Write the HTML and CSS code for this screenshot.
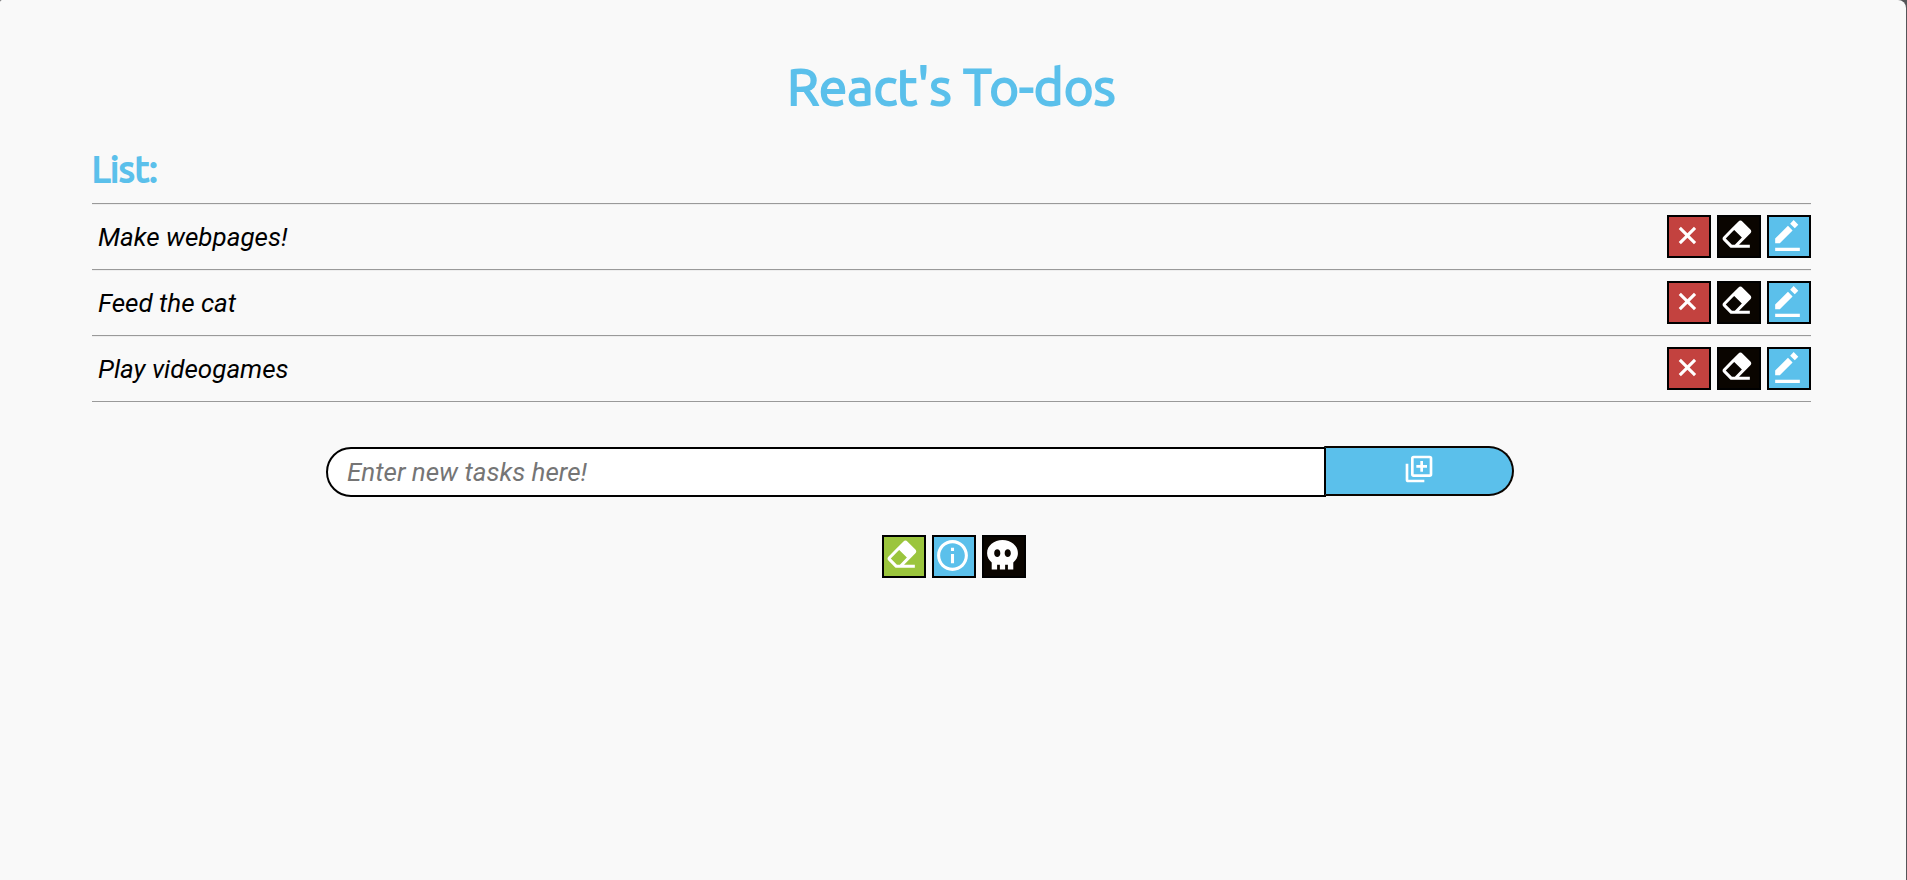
FILE: index.html
```html
<!DOCTYPE html>
<html lang="en">
<head>
<meta charset="utf-8">
<title>React's To-dos</title>
<link rel="stylesheet" href="styles.css">
</head>
<body>
<svg class="sprite" aria-hidden="true">
  <symbol id="x" viewBox="0 0 24 24"><path d="m16.192 6.344-4.243 4.242-4.242-4.242-1.414 1.414L10.535 12l-4.242 4.242 1.414 1.414 4.242-4.242 4.243 4.242 1.414-1.414L13.364 12l4.242-4.242z"/></symbol>
  <symbol id="eraser" viewBox="0 0 24 24"><path d="M12.48 3 7.73 7.75 2.99 12.59a2 2 0 0 0 0 2.82l4.3 4.3A1 1 0 0 0 8 20h12v-2h-7l7.22-7.22a2 2 0 0 0 0-2.83L15.31 3a2 2 0 0 0-2.83 0zM8.48 18H8.4l-4-4 4.75-4.84.74-.75 4.95 4.95-4.56 4.56z"/></symbol>
  <symbol id="edit" viewBox="0 0 24 24"><path d="m16 2.012 3 3L16.713 7.3l-3-3zM4 14v3h3l8.299-8.287-3-3zm0 6h16v2H4z"/></symbol>
  <symbol id="info" viewBox="0 0 24 24"><path d="M12 2C6.486 2 2 6.486 2 12s4.486 10 10 10 10-4.486 10-10S17.514 2 12 2zm0 18c-4.411 0-8-3.589-8-8s3.589-8 8-8 8 3.589 8 8-3.589 8-8 8z"/><path d="M11 11h2v6h-2zm0-4h2v2h-2z"/></symbol>
  <symbol id="skull" viewBox="0 0 24 24"><path fill-rule="evenodd" d="M12 2C6.500 2 2 5.600 2 10.500c0 2.500 1.200 4.500 3 6V21h3.500v-3H10.300v3h3.400v-3h1.800v3H19v-4.500c1.800-1.500 3-3.500 3-6C22 5.600 17.500 2 12 2zM8.600 8c1.100 0 2 1.100 2 2.500S9.700 13 8.600 13s-2-1.100-2-2.500S7.500 8 8.600 8zm6.800 0c1.100 0 2 1.100 2 2.500S16.500 13 15.400 13s-2-1.100-2-2.500S14.300 8 15.400 8z"/></symbol>
  <symbol id="add" viewBox="0 0 24 24"><path fill-rule="evenodd" d="M8 2h12a2 2 0 0 1 2 2v12a2 2 0 0 1-2 2H8a2 2 0 0 1-2-2V4a2 2 0 0 1 2-2zm0 2v12h12V4zM13 6h2v3h3v2h-3v3h-2v-3h-3V9h3zM2 8h2v12h12v2H4a2 2 0 0 1-2-2z"/></symbol>
</svg>
<main class="page">
  <h1 class="title">React's To-dos</h1>
  <h2 class="subtitle">List:</h2>
  <ul class="tasks">
    <li class="task">
      <span class="task-name">Make webpages!</span>
      <button class="btn btn-red" aria-label="Delete"><svg class="icon"><use href="#x"/></svg></button>
      <button class="btn btn-black" aria-label="Erase"><svg class="icon"><use href="#eraser"/></svg></button>
      <button class="btn btn-blue" aria-label="Edit"><svg class="icon"><use href="#edit"/></svg></button>
    </li>
    <li class="task">
      <span class="task-name">Feed the cat</span>
      <button class="btn btn-red" aria-label="Delete"><svg class="icon"><use href="#x"/></svg></button>
      <button class="btn btn-black" aria-label="Erase"><svg class="icon"><use href="#eraser"/></svg></button>
      <button class="btn btn-blue" aria-label="Edit"><svg class="icon"><use href="#edit"/></svg></button>
    </li>
    <li class="task">
      <span class="task-name">Play videogames</span>
      <button class="btn btn-red" aria-label="Delete"><svg class="icon"><use href="#x"/></svg></button>
      <button class="btn btn-black" aria-label="Erase"><svg class="icon"><use href="#eraser"/></svg></button>
      <button class="btn btn-blue" aria-label="Edit"><svg class="icon"><use href="#edit"/></svg></button>
    </li>
  </ul>
  <form class="new-task">
    <input class="new-task-input" type="text" aria-label="New task" placeholder="Enter new tasks here!">
    <button class="new-task-add" type="button" aria-label="Add task"><svg class="add-icon"><use href="#add"/></svg></button>
  </form>
  <div class="actions">
    <button class="btn btn-green" aria-label="Clear tasks"><svg class="icon"><use href="#eraser"/></svg></button>
    <button class="btn btn-blue" aria-label="Information"><svg class="icon"><use href="#info"/></svg></button>
    <button class="btn btn-black" aria-label="Delete everything"><svg class="icon"><use href="#skull"/></svg></button>
  </div>
</main>
</body>
</html>
```
FILE: styles.css
```css
* { box-sizing: border-box; }
body {
  margin: 0;
  background: #555558;
  font-family: Roboto, sans-serif;
}
.sprite { position: absolute; width: 0; height: 0; }
.page {
  min-height: 100vh;
  margin-right: 1px;
  padding: 54px 95px 0 92px;
  background: #f9f9f9;
  border-radius: 2px 8px 0 0;
}
.title, .subtitle {
  margin: 0;
  color: #5bc0eb;
  font-family: Ubuntu, "Noto Sans", sans-serif;
  font-weight: 400;
  -webkit-text-stroke: 2px #5bc0eb;
}
.title {
  font-size: 51px;
  line-height: 64px;
  text-align: center;
}
.subtitle {
  margin-top: 29px;
  font-size: 36px;
  line-height: 44px;
}
.tasks {
  margin: 12px 0 0;
  padding: 0;
  list-style: none;
  border-top: 1px solid #9a9a9a;
}
.task {
  display: flex;
  align-items: center;
  gap: 6px;
  height: 66px;
  padding-left: 6px;
  border-bottom: 1px solid #9a9a9a;
  box-shadow: inset 0 1px #eee;
}
.task-name {
  flex: 1;
  font-size: 26px;
  font-style: italic;
}
.btn {
  display: flex;
  align-items: flex-start;
  justify-content: flex-start;
  width: 44px;
  height: 43px;
  padding: 0;
  border: 2px solid #000;
  color: #fff;
}
.icon { width: 37px; height: 37px; fill: currentColor; }
.btn-red { background: #c3423f; }
.btn-black { background: #0a0500; }
.btn-blue { background: #5bc0eb; }
.btn-green { background: #9bc53d; }
.new-task {
  display: flex;
  align-items: flex-start;
  margin-top: 44px;
  padding: 0 297px 0 234px;
}
.new-task-input {
  flex: 1;
  min-width: 0;
  height: 50px;
  margin-top: 1px;
  padding: 0 19px;
  border: 2px solid #000;
  border-radius: 25px 0 0 25px;
  background: #fff;
  font: italic 26px Roboto, sans-serif;
}
.new-task-input::placeholder { color: #757575; }
.new-task-add {
  display: flex;
  align-items: center;
  justify-content: center;
  width: 190px;
  height: 50px;
  margin-left: -2px;
  padding: 0 0 4px;
  border: 2px solid #0a0500;
  border-left-color: #000;
  border-radius: 0 25px 25px 0;
  background: #5bc0eb;
  color: #fff;
}
.add-icon { width: 32px; height: 32px; fill: currentColor; }
.actions {
  display: flex;
  justify-content: center;
  gap: 6px;
  margin-top: 38px;
  padding-left: 4px;
}
```
